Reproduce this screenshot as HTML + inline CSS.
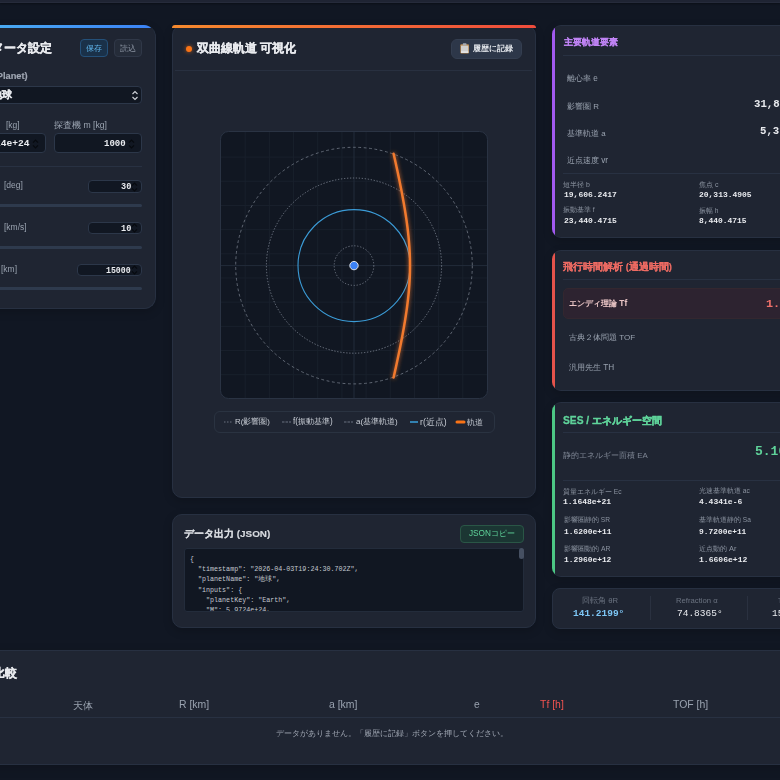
<!DOCTYPE html>
<html><head><meta charset="utf-8">
<style>
*{box-sizing:border-box;margin:0;padding:0}
html,body{width:780px;height:780px;overflow:hidden;background:#111723;font-family:"Liberation Sans",sans-serif;color:#e5e7eb}
.abs{position:absolute}
.topbar{position:absolute;left:0;top:0;width:780px;height:3px;background:#1f2433;border-bottom:1px solid #262b3b;box-shadow:0 1px 2px rgba(0,0,0,.35)}
.panel{position:absolute;background:#1f2532;border:1px solid #273041;border-radius:10px;overflow:hidden;box-shadow:0 3px 10px rgba(0,0,0,.18)}
.bar{position:absolute;overflow:hidden}
.bar>div{position:absolute;left:0;top:0;bottom:0;width:3px}
.strip{position:absolute;left:0;top:0;right:0;height:3px}
.t{position:absolute;white-space:nowrap;line-height:1;will-change:transform;z-index:2}
.m{font-family:"Liberation Mono",monospace}
.inp{position:absolute;background:#111722;border:1px solid #2c3749;border-radius:4px}
.hr{position:absolute;height:1px;background:#283142}
.track{position:absolute;height:3px;background:#2e3a4d;border-radius:2px}
</style></head><body>
<div class="topbar"></div>

<!-- LEFT PANEL -->
<div class="panel" style="left:-60px;top:25px;width:216px;height:284px;border-radius:12px;border-top:0">
  <div class="strip" style="background:linear-gradient(90deg,#4fb8f0,#3b82f6)"></div>
</div>
<div class="abs" style="left:80px;top:39px;width:28px;height:18px;background:#1a3149;border:1px solid #245079;border-radius:4px"></div>
<div class="abs" style="left:114px;top:39px;width:28px;height:18px;background:#252c39;border:1px solid #303848;border-radius:4px"></div>
<div class="inp" style="left:-60px;top:86px;width:202px;height:18px"></div>
<svg class="abs" style="left:131px;top:90px" width="8" height="11"><path d="M1.5 4 L4 1.5 L6.5 4 M1.5 7 L4 9.5 L6.5 7" fill="none" stroke="#d0d4da" stroke-width="1.1"/></svg>
<div class="inp" style="left:-60px;top:133px;width:106px;height:20px"></div>
<div class="inp" style="left:54px;top:133px;width:88px;height:20px"></div>
<div class="hr" style="left:-60px;top:166px;width:202px"></div>
<div class="inp" style="left:88px;top:180px;width:54px;height:13px"></div>
<div class="track" style="left:-60px;top:204px;width:202px"></div>
<div class="inp" style="left:88px;top:222px;width:54px;height:12px"></div>
<div class="track" style="left:-60px;top:246px;width:202px"></div>
<div class="inp" style="left:77px;top:264px;width:65px;height:12px"></div>
<div class="track" style="left:-60px;top:287px;width:202px"></div>
<svg class="abs" style="left:127.5px;top:138.5px" width="7" height="10" viewBox="0 0 7 10"><path d="M1 3.6 L3.5 1 L6 3.6 M1 6.4 L3.5 9 L6 6.4" fill="none" stroke="#070a0f" stroke-width="1.2"/></svg><svg class="abs" style="left:131px;top:181.5px" width="7" height="10" viewBox="0 0 7 10"><path d="M1 3.6 L3.5 1 L6 3.6 M1 6.4 L3.5 9 L6 6.4" fill="none" stroke="#070a0f" stroke-width="1.2"/></svg><svg class="abs" style="left:131px;top:223px" width="7" height="10" viewBox="0 0 7 10"><path d="M1 3.6 L3.5 1 L6 3.6 M1 6.4 L3.5 9 L6 6.4" fill="none" stroke="#070a0f" stroke-width="1.2"/></svg><svg class="abs" style="left:131px;top:265px" width="7" height="10" viewBox="0 0 7 10"><path d="M1 3.6 L3.5 1 L6 3.6 M1 6.4 L3.5 9 L6 6.4" fill="none" stroke="#070a0f" stroke-width="1.2"/></svg><svg class="abs" style="left:32px;top:138.5px" width="7" height="10" viewBox="0 0 7 10"><path d="M1 3.6 L3.5 1 L6 3.6 M1 6.4 L3.5 9 L6 6.4" fill="none" stroke="#070a0f" stroke-width="1.2"/></svg>


<!-- CENTER PANEL -->
<div class="panel" style="left:172px;top:25px;width:364px;height:473px"></div>
<div class="abs" style="left:172px;top:25px;width:364px;height:3px;border-radius:10px 10px 0 0;background:linear-gradient(90deg,#f68a2e,#ef4c3c)"></div>
<div class="abs" style="left:186px;top:46px;width:6px;height:6px;border-radius:50%;background:#f97316;box-shadow:0 0 4px rgba(249,115,22,.7)"></div>
<div class="abs" style="left:451px;top:39px;width:71px;height:20px;background:#2d3749;border:1px solid #343e50;border-radius:6px"></div>
<svg class="abs" style="left:459px;top:42px" width="12" height="13" viewBox="0 0 12 13"><rect x="1.3" y="2.2" width="8.7" height="9.3" rx="1" fill="#b8874e"/><rect x="2" y="3.6" width="7.3" height="7.3" fill="#cfcfcf"/><rect x="2" y="9.4" width="7.3" height="1.4" fill="#ececec"/><rect x="3.8" y="1.3" width="3.7" height="2.2" rx="0.6" fill="#a3a8b0"/></svg>
<div class="hr" style="left:175px;top:70px;width:357px;background:#283040"></div>

<svg class="abs" style="left:220px;top:131px" width="268" height="268" viewBox="0 0 268 268">
  <defs>
    <clipPath id="cp"><rect x="1" y="1" width="266" height="266" rx="7"/></clipPath>
    <filter id="glow" x="-50%" y="-10%" width="200%" height="120%"><feGaussianBlur in="SourceGraphic" stdDeviation="2" result="b"/><feComponentTransfer in="b" result="b2"><feFuncA type="linear" slope="0.8"/></feComponentTransfer><feMerge><feMergeNode in="b2"/><feMergeNode in="SourceGraphic"/></feMerge></filter>
  </defs>
  <rect x="0.5" y="0.5" width="267" height="267" rx="8" fill="#111722"/>
  <g clip-path="url(#cp)" stroke="#19202c" stroke-width="1"><line x1="25.18" y1="0" x2="25.18" y2="268"/><line x1="0" y1="26.08" x2="268" y2="26.08"/><line x1="49.36" y1="0" x2="49.36" y2="268"/><line x1="0" y1="50.26" x2="268" y2="50.26"/><line x1="73.55" y1="0" x2="73.55" y2="268"/><line x1="0" y1="74.45" x2="268" y2="74.45"/><line x1="97.73" y1="0" x2="97.73" y2="268"/><line x1="0" y1="98.63" x2="268" y2="98.63"/><line x1="121.91" y1="0" x2="121.91" y2="268"/><line x1="0" y1="122.81" x2="268" y2="122.81"/><line x1="146.09" y1="0" x2="146.09" y2="268"/><line x1="0" y1="146.99" x2="268" y2="146.99"/><line x1="170.27" y1="0" x2="170.27" y2="268"/><line x1="0" y1="171.17" x2="268" y2="171.17"/><line x1="194.45" y1="0" x2="194.45" y2="268"/><line x1="0" y1="195.35" x2="268" y2="195.35"/><line x1="218.64" y1="0" x2="218.64" y2="268"/><line x1="0" y1="219.54" x2="268" y2="219.54"/><line x1="242.82" y1="0" x2="242.82" y2="268"/><line x1="0" y1="243.72" x2="268" y2="243.72"/></g>
  <g clip-path="url(#cp)" stroke="#232c3a" stroke-width="1"><line x1="0" y1="134.6" x2="268" y2="134.6"/><line x1="134" y1="0" x2="134" y2="268"/></g>
  <circle cx="134" cy="134.6" r="118.3" fill="none" stroke="#737b88" stroke-width="0.8" stroke-dasharray="2.8 2.6"/>
  <circle cx="134" cy="134.6" r="87.6" fill="none" stroke="#858d9a" stroke-width="0.8" stroke-dasharray="1.3 1.7"/>
  <circle cx="134" cy="134.6" r="19.8" fill="none" stroke="#858d9a" stroke-width="0.8" stroke-dasharray="1.2 1.8"/>
  <circle cx="134" cy="134.6" r="56" fill="none" stroke="#3b9bd6" stroke-width="1.1"/>
  <path d="M173.60,22.70 L175.03,29.08 L176.33,34.95 L177.50,40.36 L178.56,45.38 L179.53,50.05 L180.41,54.42 L181.22,58.52 L181.97,62.37 L182.65,66.02 L183.28,69.47 L183.87,72.75 L184.41,75.88 L184.90,78.86 L185.36,81.72 L185.79,84.46 L186.19,87.10 L186.56,89.64 L186.90,92.10 L187.21,94.47 L187.51,96.78 L187.78,99.01 L188.03,101.19 L188.26,103.31 L188.48,105.38 L188.68,107.41 L188.86,109.39 L189.02,111.34 L189.17,113.25 L189.31,115.13 L189.43,116.99 L189.54,118.81 L189.64,120.62 L189.73,122.41 L189.80,124.18 L189.86,125.94 L189.91,127.68 L189.95,129.42 L189.98,131.15 L189.99,132.88 L190.00,134.60 L189.99,136.32 L189.98,138.05 L189.95,139.78 L189.91,141.52 L189.86,143.26 L189.80,145.02 L189.73,146.79 L189.64,148.58 L189.54,150.39 L189.43,152.21 L189.31,154.07 L189.17,155.95 L189.02,157.86 L188.86,159.81 L188.68,161.79 L188.48,163.82 L188.26,165.89 L188.03,168.01 L187.78,170.19 L187.51,172.42 L187.21,174.73 L186.90,177.10 L186.56,179.56 L186.19,182.10 L185.79,184.74 L185.36,187.48 L184.90,190.34 L184.41,193.32 L183.87,196.45 L183.28,199.73 L182.65,203.18 L181.97,206.83 L181.22,210.68 L180.41,214.78 L179.53,219.15 L178.56,223.82 L177.50,228.84 L176.33,234.25 L175.03,240.12 L173.60,246.50" fill="none" stroke="#f27a2e" stroke-width="2.5" stroke-linecap="round" filter="url(#glow)"/>
  <circle cx="134" cy="134.6" r="4.2" fill="#3b82f6" stroke="#dfe3ea" stroke-width="1"/>
  <rect x="0.5" y="0.5" width="267" height="267" rx="8" fill="none" stroke="#2a3343"/>
</svg>

<div class="abs" style="left:214px;top:411px;width:281px;height:22px;border:1px solid #2a3341;border-radius:6px"></div>
<svg class="abs" style="left:214px;top:411px" width="281" height="22">
  <line x1="10" y1="11" x2="19" y2="11" stroke="#6b7380" stroke-width="1.2" stroke-dasharray="1.5 1.5"/>
  <line x1="68" y1="11" x2="77" y2="11" stroke="#6b7380" stroke-width="1.2" stroke-dasharray="2.5 1"/>
  <line x1="130" y1="11" x2="139" y2="11" stroke="#6b7380" stroke-width="1.2" stroke-dasharray="2.5 1"/>
  <line x1="196" y1="11" x2="204" y2="11" stroke="#3aa0dc" stroke-width="1.5"/>
  <line x1="243" y1="11" x2="250" y2="11" stroke="#f97316" stroke-width="3" stroke-linecap="round"/>
</svg>

<!-- JSON PANEL -->
<div class="panel" style="left:172px;top:514px;width:364px;height:114px"></div>
<div class="abs" style="left:460px;top:525px;width:64px;height:18px;background:#1b3633;border:1px solid #2a5646;border-radius:4px"></div>
<div class="abs" style="left:184px;top:548px;width:340px;height:64px;background:#111722;border:1px solid #232c3b;border-radius:3px;overflow:hidden">
<pre class="m" style="position:absolute;left:5px;top:5px;font-size:6.7px;line-height:10.2px;color:#c3c8d0">{
  "timestamp": "2026-04-03T19:24:30.702Z",
  "planetName": "地球",
  "inputs": {
    "planetKey": "Earth",
    "M": 5.9724e+24,
</pre>
</div>
<div class="abs" style="left:519px;top:548px;width:5px;height:11px;background:#465062;border-radius:3px"></div>

<!-- RIGHT PANELS -->
<div class="panel" style="left:552px;top:25px;width:300px;height:213px;border-radius:9px;border-left:0"><div class="bar" style="left:0;top:0;bottom:0;width:3px"><div style="left:0;width:3px;background:#a259f0"></div></div></div>
<div class="hr" style="left:563px;top:55px;width:230px"></div>
<div class="hr" style="left:563px;top:173px;width:230px"></div>

<div class="panel" style="left:552px;top:250px;width:300px;height:141px;border-radius:9px;border-left:0"><div class="bar" style="left:0;top:0;bottom:0;width:3px"><div style="left:0;width:3px;background:#e5534b"></div></div></div>
<div class="hr" style="left:563px;top:279px;width:230px"></div>
<div class="abs" style="left:563px;top:288px;width:230px;height:31px;background:#2d2330;border:1px solid #33272f;border-radius:5px"></div>

<div class="panel" style="left:552px;top:402px;width:300px;height:175px;border-radius:9px;border-left:0"><div class="bar" style="left:0;top:0;bottom:0;width:3px"><div style="left:0;width:3px;background:#4cc784"></div></div></div>
<div class="hr" style="left:563px;top:432px;width:230px"></div>
<div class="hr" style="left:563px;top:480px;width:230px"></div>

<div class="panel" style="left:552px;top:588px;width:300px;height:41px;border-radius:8px"></div>
<div class="abs" style="left:650px;top:596px;width:1px;height:24px;background:#2a3140"></div>
<div class="abs" style="left:747px;top:596px;width:1px;height:24px;background:#2a3140"></div>

<!-- BOTTOM TABLE -->
<div class="panel" style="left:-20px;top:650px;width:820px;height:115px;border-radius:0"></div>
<div class="hr" style="left:0;top:717px;width:780px"></div>

<div id="L1" class="t" style="left:-31.70px;top:42.20px;font-size:12.00px;color:#e8eaee;font-weight:bold;-webkit-text-stroke:0.28px #e8eaee">パラメータ設定</div>
<div id="L2" class="t" style="left:86.30px;top:43.60px;font-size:8.31px;color:#5fb4ea">保存</div>
<div id="L3" class="t" style="left:119.60px;top:43.60px;font-size:8.42px;color:#8a93a1">読込</div>
<div id="L4" class="t" style="left:-45.10px;top:72.20px;font-size:9.30px;color:#a0a7b3;font-weight:bold;-webkit-text-stroke:0.15px #a0a7b3">天体選択 (Planet)</div>
<div id="L5" class="t" style="left:-8.10px;top:89.50px;font-size:10.00px;color:#e8eaee;font-weight:bold;-webkit-text-stroke:0.28px #e8eaee">地球</div>
<div id="L6" class="t" style="left:5.60px;top:120.50px;font-size:8.50px;color:#9aa3b0">[kg]</div>
<div id="L7" class="t" style="left:53.80px;top:120.50px;font-size:8.66px;color:#9aa3b0">探査機 m [kg]</div>
<div id="L8" class="t m" style="left:-28.30px;top:138.50px;font-size:9.60px;color:#e8eaee;font-weight:bold">5.9724e+24</div>
<div id="L9" class="t m" style="left:104.30px;top:138.70px;font-size:9.02px;color:#e8eaee;font-weight:bold">1000</div>
<div id="L10" class="t" style="left:4.20px;top:181.40px;font-size:8.50px;color:#9aa3b0">[deg]</div>
<div id="L11" class="t m" style="left:120.60px;top:183.30px;font-size:8.55px;color:#e8eaee;font-weight:bold">30</div>
<div id="L12" class="t" style="left:4.40px;top:222.90px;font-size:8.50px;color:#9aa3b0">[km/s]</div>
<div id="L13" class="t m" style="left:120.60px;top:225.00px;font-size:8.55px;color:#e8eaee;font-weight:bold">10</div>
<div id="L14" class="t" style="left:1.00px;top:264.50px;font-size:8.50px;color:#9aa3b0">[km]</div>
<div id="L15" class="t m" style="left:106.30px;top:266.60px;font-size:8.23px;color:#e8eaee;font-weight:bold">15000</div>
<div id="C1" class="t" style="left:197.00px;top:42.20px;font-size:12.04px;color:#e8eaee;font-weight:bold;-webkit-text-stroke:0.28px #e8eaee">双曲線軌道 可視化</div>
<div id="C2" class="t" style="left:472.80px;top:45.20px;font-size:7.56px;color:#e2e5ea;font-weight:bold">履歴に記録</div>
<div id="C3" class="t" style="left:235.30px;top:418.20px;font-size:7.86px;color:#c9ced6">R(影響圏)</div>
<div id="C4" class="t" style="left:292.50px;top:418.20px;font-size:8.16px;color:#c9ced6">f(振動基準)</div>
<div id="C5" class="t" style="left:356.00px;top:418.20px;font-size:8.00px;color:#c9ced6">a(基準軌道)</div>
<div id="C6" class="t" style="left:420.00px;top:417.70px;font-size:8.68px;color:#c9ced6">r(近点)</div>
<div id="C7" class="t" style="left:466.80px;top:418.70px;font-size:7.80px;color:#c9ced6">軌道</div>
<div id="C8" class="t" style="left:183.50px;top:528.50px;font-size:9.91px;color:#d8dbe0;font-weight:bold;-webkit-text-stroke:0.15px #d8dbe0">データ出力 (JSON)</div>
<div id="C9" class="t" style="left:468.60px;top:530.10px;font-size:8.24px;color:#5fd39a">JSONコピー</div>
<div id="R1" class="t" style="left:563.50px;top:38.10px;font-size:9.10px;color:#c184f6;font-weight:bold;-webkit-text-stroke:0.15px #c184f6">主要軌道要素</div>
<div id="R2" class="t" style="left:567.20px;top:74.90px;font-size:8.16px;color:#9aa3b0">離心率 e</div>
<div id="R3" class="t" style="left:567.20px;top:103.00px;font-size:7.91px;color:#9aa3b0">影響圏 R</div>
<div id="R4" class="t" style="left:567.20px;top:129.70px;font-size:7.91px;color:#9aa3b0">基準軌道 a</div>
<div id="R5" class="t" style="left:567.30px;top:156.70px;font-size:8.18px;color:#9aa3b0">近点速度 vr</div>
<div id="R6" class="t m" style="left:753.80px;top:99.30px;font-size:10.70px;color:#e8eaee;font-weight:bold">31,820.1234</div>
<div id="R7" class="t m" style="left:760.00px;top:126.00px;font-size:10.70px;color:#e8eaee;font-weight:bold">5,313.5000</div>
<div id="R8" class="t" style="left:563.10px;top:181.70px;font-size:6.94px;color:#8b93a0">短半径 b</div>
<div id="R9" class="t m" style="left:563.60px;top:191.00px;font-size:8.00px;color:#e8eaee;font-weight:bold">19,606.2417</div>
<div id="R10" class="t" style="left:698.50px;top:180.50px;font-size:7.00px;color:#8b93a0">焦点 c</div>
<div id="R11" class="t m" style="left:698.50px;top:191.00px;font-size:7.98px;color:#e8eaee;font-weight:bold">20,313.4905</div>
<div id="R12" class="t" style="left:563.10px;top:207.40px;font-size:6.70px;color:#8b93a0">振動基準 f</div>
<div id="R13" class="t m" style="left:563.60px;top:217.00px;font-size:8.00px;color:#e8eaee;font-weight:bold">23,440.4715</div>
<div id="R14" class="t" style="left:698.50px;top:207.50px;font-size:6.66px;color:#8b93a0">振幅 h</div>
<div id="R15" class="t m" style="left:698.50px;top:217.00px;font-size:7.93px;color:#e8eaee;font-weight:bold">8,440.4715</div>
<div id="R16" class="t" style="left:563.40px;top:261.90px;font-size:9.54px;color:#ee6b63;font-weight:bold;-webkit-text-stroke:0.15px #ee6b63">飛行時間解析 (通過時間)</div>
<div id="R17" class="t" style="left:569.10px;top:298.50px;font-size:8.36px;color:#ebc6c6;font-weight:bold">エンディ理論 Tf</div>
<div id="R18" class="t m" style="left:766.00px;top:298.50px;font-size:11.80px;color:#f0716a;font-weight:bold">1.2345</div>
<div id="R19" class="t" style="left:569.10px;top:333.50px;font-size:8.06px;color:#9aa3b0">古典２体問題 TOF</div>
<div id="R20" class="t" style="left:569.10px;top:364.00px;font-size:8.20px;color:#9aa3b0">汎用先生 TH</div>
<div id="R21" class="t" style="left:563.40px;top:415.50px;font-size:10.22px;color:#5fd39a;font-weight:bold;-webkit-text-stroke:0.28px #5fd39a">SES / エネルギー空間</div>
<div id="R22" class="t" style="left:563.40px;top:451.50px;font-size:7.86px;color:#7e8694">静的エネルギー面積 EA</div>
<div id="R23" class="t m" style="left:755.10px;top:445.10px;font-size:13.00px;color:#5fd39a;font-weight:bold">5.1040e+11</div>
<div id="R24" class="t" style="left:563.40px;top:488.70px;font-size:6.70px;color:#8b93a0">質量エネルギー Ec</div>
<div id="R25" class="t m" style="left:563.40px;top:498.40px;font-size:8.01px;color:#e8eaee;font-weight:bold">1.1648e+21</div>
<div id="R26" class="t" style="left:698.70px;top:488.30px;font-size:6.62px;color:#8b93a0">光速基準軌道 ac</div>
<div id="R27" class="t m" style="left:698.70px;top:498.30px;font-size:8.03px;color:#e8eaee;font-weight:bold">4.4341e-6</div>
<div id="R28" class="t" style="left:563.60px;top:517.20px;font-size:6.58px;color:#8b93a0">影響圏静的 SR</div>
<div id="R29" class="t m" style="left:563.60px;top:527.50px;font-size:7.91px;color:#e8eaee;font-weight:bold">1.6200e+11</div>
<div id="R30" class="t" style="left:698.50px;top:517.20px;font-size:6.56px;color:#8b93a0">基準軌道静的 Sa</div>
<div id="R31" class="t m" style="left:698.50px;top:527.50px;font-size:7.90px;color:#e8eaee;font-weight:bold">9.7200e+11</div>
<div id="R32" class="t" style="left:563.60px;top:546.20px;font-size:6.76px;color:#8b93a0">影響圏動的 AR</div>
<div id="R33" class="t m" style="left:563.60px;top:555.70px;font-size:7.90px;color:#e8eaee;font-weight:bold">1.2960e+12</div>
<div id="R34" class="t" style="left:698.50px;top:545.20px;font-size:7.47px;color:#8b93a0">近点動的 Ar</div>
<div id="R35" class="t m" style="left:698.50px;top:555.70px;font-size:8.06px;color:#e8eaee;font-weight:bold">1.6606e+12</div>
<div id="R36" class="t" style="left:581.80px;top:597.40px;font-size:7.70px;color:#6b7380">回転角 θR</div>
<div id="R37" class="t m" style="left:573.40px;top:608.90px;font-size:9.50px;color:#7dc6f5;font-weight:bold">141.2199°</div>
<div id="R38" class="t" style="left:675.90px;top:596.80px;font-size:7.70px;color:#6b7380">Refraction α</div>
<div id="R39" class="t m" style="left:676.50px;top:608.70px;font-size:9.51px;color:#e8eaee">74.8365°</div>
<div id="R40" class="t m" style="left:771.70px;top:608.70px;font-size:9.50px;color:#e8eaee">15.1234°</div>
<div id="R41" class="t" style="left:777.60px;top:596.80px;font-size:7.00px;color:#6b7380">Turn δ</div>
<div id="B1" class="t" style="left:-31.00px;top:667.20px;font-size:12.00px;color:#e8eaee;font-weight:bold;-webkit-text-stroke:0.28px #e8eaee">履歴比較</div>
<div id="B2" class="t" style="left:73.20px;top:700.50px;font-size:10.30px;color:#9aa3b0">天体</div>
<div id="B3" class="t" style="left:179.00px;top:700.00px;font-size:10.45px;color:#9aa3b0">R [km]</div>
<div id="B4" class="t" style="left:329.10px;top:700.00px;font-size:10.45px;color:#9aa3b0">a [km]</div>
<div id="B5" class="t" style="left:473.50px;top:700.00px;font-size:10.30px;color:#9aa3b0">e</div>
<div id="B6" class="t" style="left:540.40px;top:700.00px;font-size:10.45px;color:#ef5350">Tf [h]</div>
<div id="B7" class="t" style="left:673.10px;top:700.00px;font-size:10.45px;color:#9aa3b0">TOF [h]</div>
<div id="B8" class="t" style="left:275.80px;top:730.10px;font-size:8.08px;color:#a0a7b3">データがありません。「履歴に記録」ボタンを押してください。</div>

</body></html>
